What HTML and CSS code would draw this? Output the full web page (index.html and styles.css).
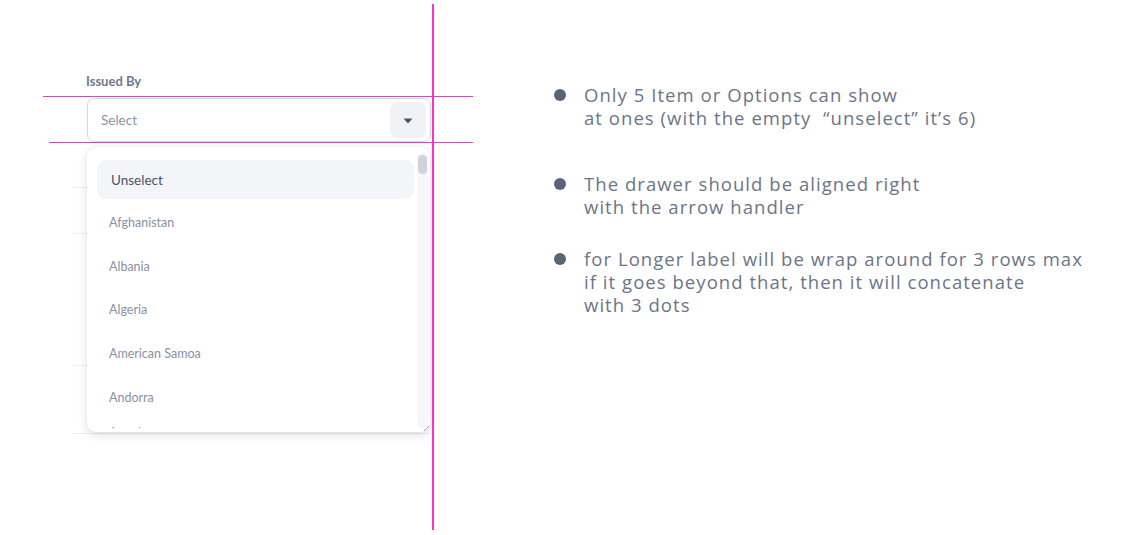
FILE: index.html
```html
<!DOCTYPE html>
<html>
<head>
<meta charset="utf-8">
<link rel="stylesheet" href="styles.css">
</head>
<body>
<div class="page">
  <section class="field">
    <div class="label">Issued By</div>
    <div class="select">
      <span class="placeholder">Select</span>
      <span class="arrow-btn">
        <svg width="10" height="6" viewBox="0 0 10 6"><path d="M0.5 0.5 H9.5 L5 5.5 Z" fill="#4b5563"/></svg>
      </span>
    </div>
    <div class="rows">
      <div class="row r1"></div>
      <div class="row r2"></div>
      <div class="row r3"></div>
      <div class="row r4"></div>
    </div>
    <div class="drawer">
      <ul class="options">
        <li class="opt unselect">Unselect</li>
        <li class="opt">Afghanistan</li>
        <li class="opt">Albania</li>
        <li class="opt">Algeria</li>
        <li class="opt">American Samoa</li>
        <li class="opt">Andorra</li>
        <li class="opt last">Angola</li>
      </ul>
      <div class="scroll-track"><div class="scroll-thumb"></div></div>
      <svg class="grip" width="8" height="8" viewBox="0 0 8 8"><path d="M7 2 L2 7 M7 5 L5 7" stroke="#9aa1ad" stroke-width="1"/></svg>
    </div>
  </section>

  <ul class="notes">
    <li class="n1">Only 5 Item or Options can show<br>at ones (with the empty&nbsp; “unselect” it’s 6)</li>
    <li class="n2">The drawer should be aligned right<br>with the arrow handler</li>
    <li class="n3">for Longer label will be wrap around for 3 rows max<br>if it goes beyond that, then it will concatenate<br>with 3 dots</li>
  </ul>

  <div class="guide guide-v"></div>
  <div class="guide guide-h1"></div>
  <div class="guide guide-h2"></div>
</div>
</body>
</html>
```

FILE: styles.css
```css
* { box-sizing: border-box; }
html, body { margin: 0; padding: 0; background: #ffffff; }
.page {
  position: relative;
  width: 1137px;
  height: 535px;
  display: flex;
  align-items: flex-start;
  font-family: "Lato", "Noto Sans", sans-serif;
  overflow: hidden;
}

.field {
  position: relative;
  margin-left: 72px;
  margin-top: 74px;
  width: 360px;
}
.label {
  margin-left: 14px;
  font-size: 13px;
  font-weight: 700;
  color: #6f7990;
  line-height: 14px;
  height: 24px;
}
.select {
  margin-left: 15px;
  width: 344px;
  height: 44px;
  border: 1px solid #d3d7de;
  border-radius: 7px;
  display: flex;
  align-items: center;
  justify-content: space-between;
  padding: 0 4px 0 13px;
}
.placeholder {
  font-size: 13.5px;
  color: #8b94a7;
}
.arrow-btn {
  width: 36px;
  height: 36px;
  border-radius: 7px;
  background: #f0f2f6;
  display: flex;
  align-items: center;
  justify-content: center;
}
.arrow-btn svg { display: block; margin-top: 1px; }

.rows { width: 358px; }
.row { border-bottom: 1px solid #eeeeee; }
.r1 { height: 46px; }
.r2 { height: 46px; }
.r3 { height: 132px; }
.r4 { height: 68px; }

.drawer {
  position: absolute;
  left: 15px;
  top: 73px;
  width: 343px;
  height: 285px;
  background: #ffffff;
  border-radius: 9px;
  box-shadow: 0 3px 10px rgba(30, 40, 60, 0.14), 0 0 2px rgba(30, 40, 60, 0.08);
  overflow: hidden;
}
.options {
  list-style: none;
  margin: 0;
  padding: 13px 0 0 10px;
  width: 327px;
  height: 281px;
  overflow: hidden;
}
.opt {
  height: 43.6px;
  display: flex;
  align-items: center;
  padding-left: 12px;
  font-size: 12.5px;
  color: #8891a8;
}
.opt.last { margin-top: -8px; }
.opt.unselect {
  height: 39px;
  margin-bottom: 2px;
  background: #f4f5f8;
  border-radius: 9px;
  padding-left: 14px;
  font-size: 13.5px;
  color: #4a5468;
}
.scroll-track {
  position: absolute;
  right: 2px;
  top: 6px;
  width: 11px;
  height: 275px;
  background: #f6f6fb;
  border-radius: 4px;
}
.scroll-thumb {
  margin: 2px 0 0 1px;
  width: 9px;
  height: 19px;
  border-radius: 5px;
  background: #cdd2dc;
}
.grip {
  position: absolute;
  right: 0;
  bottom: 0;
}

.notes {
  list-style: none;
  margin: 83px 0 0 122px;
  padding: 0;
  font-family: "Open Sans", "Noto Sans", sans-serif;
  font-weight: 400;
  font-size: 18.5px;
  line-height: 23px;
  color: #6c7589;
  letter-spacing: 1.05px;
}
.notes li {
  position: relative;
  padding-left: 30px;
}
.notes .n1 { margin-bottom: 43px; }
.notes .n2 { margin-bottom: 29px; }
.notes li::before {
  content: "";
  position: absolute;
  left: 0;
  top: 6px;
  width: 12px;
  height: 12px;
  border-radius: 50%;
  background: #5a6479;
}

.guide { position: absolute; background: #ff2fd0; }
.guide-v { left: 432px; top: 4px; width: 2px; height: 526px; }
.guide-h1 { left: 43px; top: 96px; width: 430px; height: 1px; }
.guide-h2 { left: 49px; top: 142px; width: 424px; height: 1px; }
```
